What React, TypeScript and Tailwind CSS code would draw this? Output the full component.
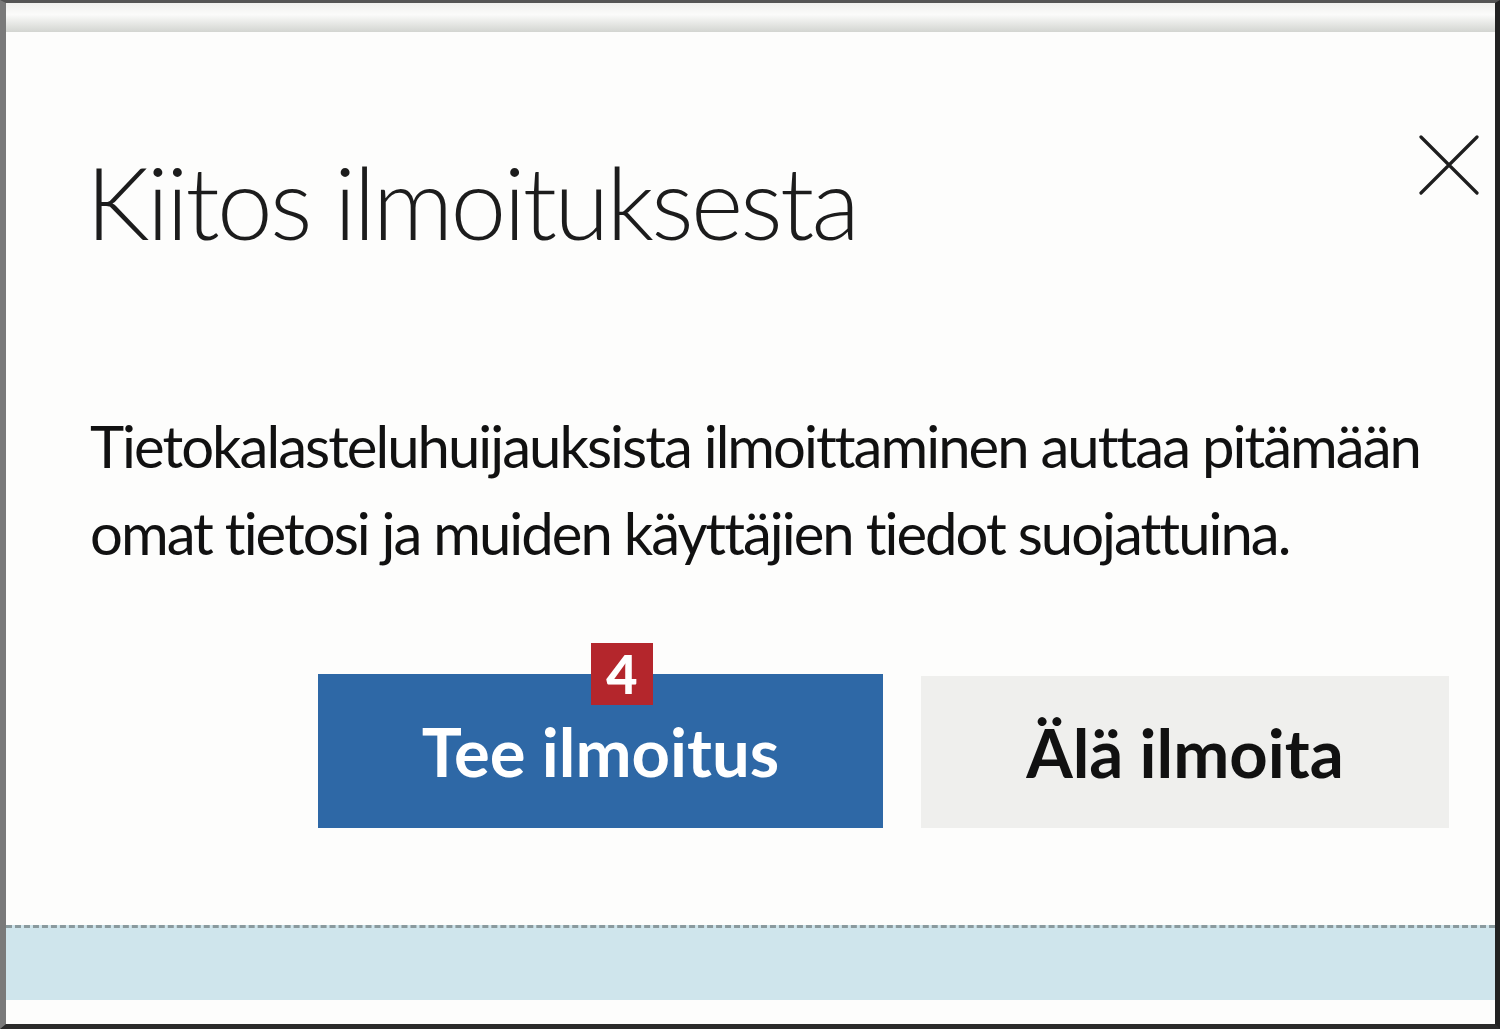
export default function App() {
  return (
    <main className="w-[1500px] h-[1029px] overflow-hidden bg-white">
      <div className="h-full flex flex-col border-t-[3px] border-t-[#555] border-l-[6px] border-l-[#7a7a7a] border-r-[5px] border-r-[#222] border-b-[5px] border-b-[#2a2a2a] bg-[#fdfdfc]">

        {/* top bar */}
        <div className="shrink-0 h-[29px] bg-gradient-to-b from-[#f0f0ee] via-[#fbfbfa] via-40% to-[#d3d5d1]" />

        {/* title row */}
        <div className="shrink-0 mt-[105px] flex items-start justify-between pl-[80px] pr-[16px]">
          <h1 className="mt-[14px] text-[100px] leading-none font-light tracking-[-0.028em] text-[#1c1c1c] whitespace-nowrap font-['Lato',sans-serif]">
            Kiitos ilmoituksesta
          </h1>
          <svg width="60" height="60" viewBox="0 0 60 60" className="shrink-0 -mt-[2px]">
            <path d="M2 2 L58 58 M58 2 L2 58" stroke="#1e1e1e" strokeWidth="3.2" strokeLinecap="round" />
          </svg>
        </div>

        {/* body */}
        <p className="shrink-0 mt-[151px] pl-[84px] text-[58px] leading-[87px] tracking-[-0.034em] text-[#111] whitespace-nowrap font-['Lato',sans-serif]">
          Tietokalasteluhuijauksista ilmoittaminen auttaa pitämään
          <br />
          omat tietosi ja muiden käyttäjien tiedot suojattuina.
        </p>

        {/* buttons */}
        <div className="shrink-0 mt-[98px] flex justify-end gap-[38px] pr-[46px]">
          <button className="relative w-[565px] h-[154px] bg-[#2e68a6] text-white text-[67px] font-bold font-['Lato',sans-serif]">
            Tee ilmoitus
            <span className="absolute left-[273px] -top-[31px] w-[62px] h-[62px] flex items-center justify-center bg-[#b4262c] text-white text-[54px] font-black leading-none font-['Lato',sans-serif]">
              4
            </span>
          </button>
          <button className="w-[528px] h-[152px] mt-[2px] bg-[#efefed] text-[#111] text-[67px] font-bold font-['Lato',sans-serif]">
            Älä ilmoita
          </button>
        </div>

        {/* blue band below */}
        <div className="shrink-0 mt-[97px] h-[75px] bg-[#cfe5ec] border-t-[3px] border-dashed border-t-[#8a9a9e]" />
      </div>
    </main>
  );
}
